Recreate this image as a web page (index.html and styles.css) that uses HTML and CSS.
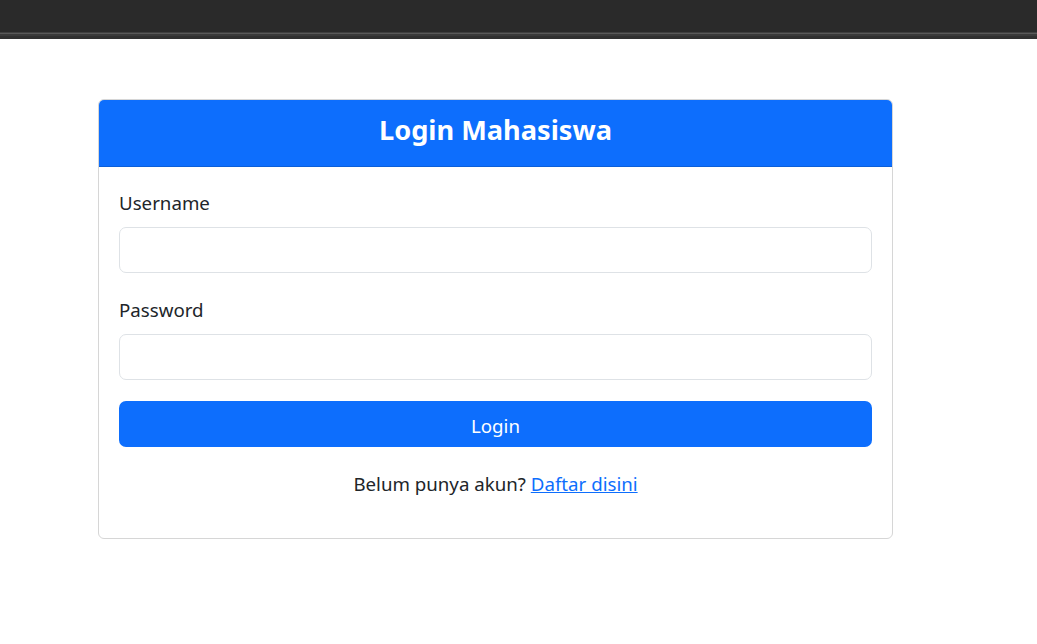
FILE: index.html
```html
<!DOCTYPE html>
<html lang="id">
<head>
<meta charset="utf-8">
<title>Login Mahasiswa</title>
<link rel="stylesheet" href="styles.css">
</head>
<body>
<div class="topbar"><div class="topbar-line"></div></div>
<main class="page">
  <section class="card">
    <header class="card-header"><h3 class="card-title">Login Mahasiswa</h3></header>
    <form class="card-body">
      <div class="field">
        <label class="field-label" for="username">Username</label>
        <input class="field-input" id="username" type="text">
      </div>
      <div class="field">
        <label class="field-label" for="password">Password</label>
        <input class="field-input" id="password" type="password">
      </div>
      <button class="btn-login" type="button">Login</button>
      <p class="register">Belum punya akun? <a href="#" class="register-link">Daftar disini</a></p>
    </form>
  </section>
</main>
</body>
</html>
```
FILE: styles.css
```css
* { box-sizing: border-box; }
html, body { margin: 0; padding: 0; background: #fff; }
body {
  font-family: "Noto Sans", "Open Sans", sans-serif;
  color: #212529;
  font-size: 18.7px;
}
.topbar {
  height: 39px;
  background: #2a2a2a;
  padding-top: 32px;
}
.topbar-line {
  height: 7px;
  border-top: 1px solid #404040;
  background: linear-gradient(#5a5a5a 0 1px, #3b3b3b 1px 3px, #313131 3px);
}
.page {
  padding: 60px 0 0 98px;
}
.card {
  width: 795px;
  border: 1px solid #d6d6d6;
  border-radius: 6px;
  overflow: hidden;
}
.card-header {
  background: #0d6efd;
  height: 67px;
  display: flex;
  align-items: center;
  justify-content: center;
  border-bottom: 1px solid #0b5fd8;
}
.card-title {
  margin: 0;
  color: #fff;
  font-size: 27.2px;
  font-weight: 700;
  line-height: 1;
  padding-bottom: 7px;
}
.card-body {
  padding: 20px 20px 0 20px;
  margin: 0;
  display: flex;
  flex-direction: column;
}
.field {
  display: flex;
  flex-direction: column;
  margin-bottom: 21px;
}
.field-label {
  height: 30px;
  line-height: 29px;
  padding-top: 1px;
  margin-bottom: 10px;
}
.field-input {
  height: 46px;
  border: 1px solid #dee2e6;
  border-radius: 7px;
  font: inherit;
  padding: 0 14px;
  outline: none;
}
.btn-login {
  height: 46px;
  background: #0d6efd;
  color: #fff;
  border: none;
  border-radius: 7px;
  font: inherit;
  padding: 3px 0 0;
  cursor: pointer;
}
.register {
  margin: 22px 0 40px;
  text-align: center;
  line-height: 29px;
}
.register-link {
  color: #0d6efd;
  text-decoration: underline;
}
```
